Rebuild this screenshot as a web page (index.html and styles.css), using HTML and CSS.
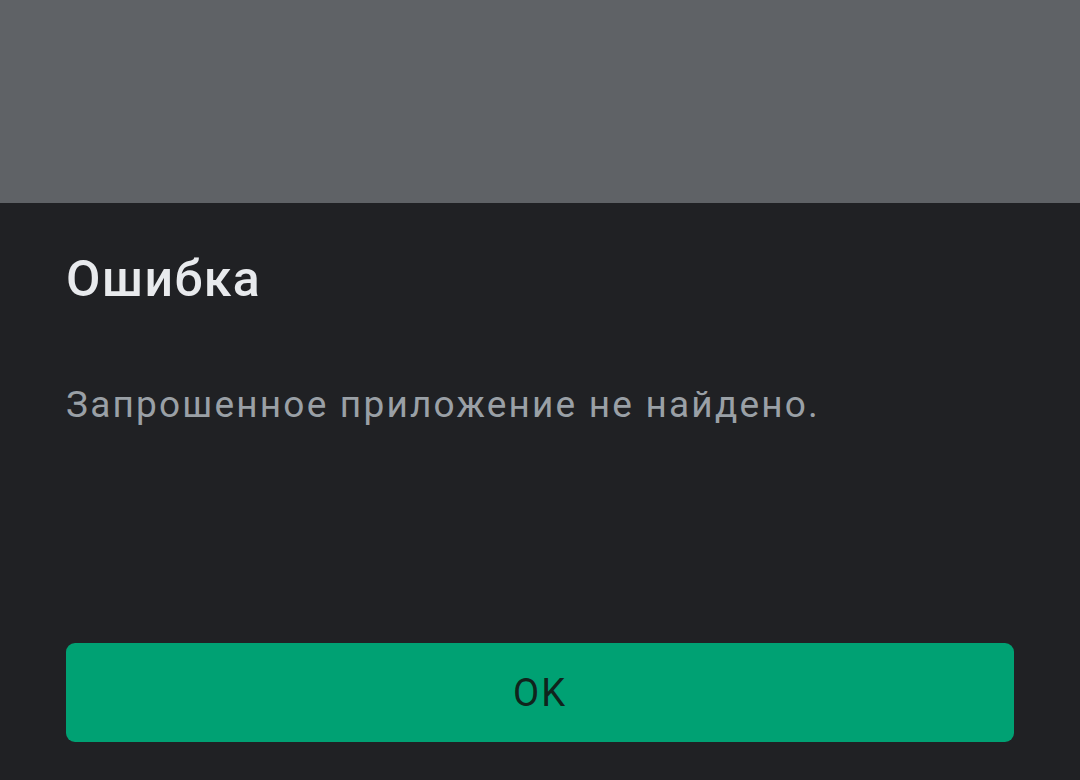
FILE: index.html
```html
<!DOCTYPE html>
<html lang="ru">
<head>
    <meta charset="UTF-8">
    <meta name="viewport" content="width=device-width, initial-scale=1.0">
    <title>Ошибка</title>
    <link rel="stylesheet" href="styles.css">
</head>
<body>
    <div class="scrim"></div>
    <div class="sheet">
        <h1 class="sheet-title">Ошибка</h1>
        <p class="sheet-text">Запрошенное приложение не найдено.</p>
        <button class="ok-btn">OK</button>
    </div>
</body>
</html>
```

FILE: styles.css
```css
html, body {
    height: 100%;
}

body {
    margin: 0;
    font-family: Roboto, 'Noto Sans', sans-serif;
    background-color: #202124;
    display: flex;
    flex-direction: column;
    overflow: hidden;
}

.scrim {
    height: 203px;
    flex-shrink: 0;
    background-color: #5f6266;
}

.sheet {
    flex: 1;
    background-color: #202124;
    padding: 0 66px;
    display: flex;
    flex-direction: column;
}

.sheet-title {
    margin: 48px 0 0;
    font-size: 50px;
    font-weight: 500;
    line-height: 56px;
    letter-spacing: 1.5px;
    color: #e8eaed;
}

.sheet-text {
    margin: 76px 0 0;
    font-size: 37px;
    line-height: 44px;
    letter-spacing: 2.2px;
    color: #9aa0a6;
}

.ok-btn {
    margin-top: auto;
    margin-bottom: 38px;
    height: 99px;
    border: none;
    border-radius: 9px;
    background-color: #00a173;
    color: #10241c;
    font-family: inherit;
    font-size: 38px;
    font-weight: 400;
    letter-spacing: 2px;
    cursor: pointer;
}
```
